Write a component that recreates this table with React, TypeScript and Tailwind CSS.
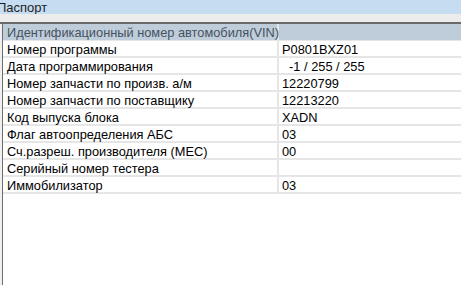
import React from "react";

const rows: [string, string][] = [
  ["Номер программы", "P0801BXZ01"],
  ["Дата программирования", "  -1 / 255 / 255"],
  ["Номер запчасти по произв. а/м", "12220799"],
  ["Номер запчасти по поставщику", "12213220"],
  ["Код выпуска блока", "XADN"],
  ["Флаг автоопределения АБС", "03"],
  ["Сч.разреш. производителя (MEC)", "00"],
  ["Серийный номер тестера", ""],
  ["Иммобилизатор", "03"],
];

export default function App() {
  return (
    <div
      className="w-[461px] h-[285px] overflow-hidden bg-white flex flex-col text-[12.8px] text-black"
      style={{ fontFamily: '"Liberation Sans", Arial, sans-serif' }}
    >
      {/* window caption */}
      <div className="h-[14px] bg-[#c6dcf1] flex items-center overflow-hidden">
        <span className="ml-[-3px] leading-none text-[#1e1e1e] text-[13px]">Паспорт</span>
      </div>
      <div className="h-[8px] bg-[#ececec]" />
      <div className="h-[2px] bg-[#6a6a6a]" />

      <div className="flex-1 flex">
        <div className="w-[2px] bg-[#f0f0f0]" />
        <div className="w-[1px] bg-[#6e6e6e]" />
        <div className="flex-1 flex flex-col">
          {/* header row */}
          <div className="h-[17px] bg-[#bfcddb] flex border-b border-[#e6e6e6]">
            <div className="w-[276px] pl-[4px] pt-[2px] flex items-center whitespace-nowrap text-[#46525e] border-r-2 border-[#e6e6e6]">
              Идентификационный номер автомобиля(VIN)
            </div>
            <div className="flex-1" />
          </div>
          {rows.map(([k, v]) => (
            <div key={k} className="h-[17px] flex border-b-2 border-[#e6e6e6]">
              <div className="w-[276px] pl-[4px] pt-[3px] flex items-center whitespace-nowrap border-r-2 border-[#e6e6e6]">
                {k}
              </div>
              <div className="flex-1 pl-[3px] pt-[3px] flex items-center whitespace-pre">{v}</div>
            </div>
          ))}
        </div>
      </div>
    </div>
  );
}
